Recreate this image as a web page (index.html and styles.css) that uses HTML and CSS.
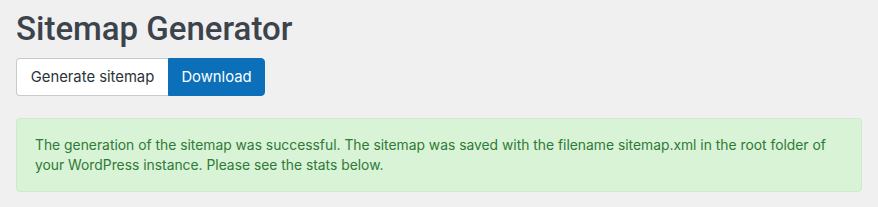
FILE: index.html
```html
<!DOCTYPE html>
<html lang="en">

<head>
    <meta charset="UTF-8">
    <meta name="viewport" content="width=device-width, initial-scale=1.0">
    <title>Sitemap Generator</title>
    <link rel="stylesheet" href="styles.css">
</head>

<body>
    <div class="wrap">
        <h1 class="page-title">Sitemap Generator</h1>
        <div class="actions">
            <button class="btn btn-default">Generate sitemap</button>
            <button class="btn btn-primary">Download</button>
        </div>
        <div class="notice notice-success">
            The generation of the sitemap was successful. The sitemap was saved with the filename sitemap.xml in the root folder of your WordPress instance. Please see the stats below.
        </div>
    </div>
</body>

</html>
```

FILE: styles.css
```css
* {
    padding: 0;
    margin: 0;
    box-sizing: border-box;
}

body {
    background-color: #f0f0f1;
    font-family: Inter, "Liberation Sans", sans-serif;
    color: #3c434a;
}

.wrap {
    padding: 8px 16px 0 16px;
}

.page-title {
    font-family: Roboto, Inter, sans-serif;
    font-size: 33px;
    font-weight: 500;
    line-height: 42px;
    color: #3c434a;
}

.actions {
    display: flex;
    margin-top: 8px;
}

.btn {
    height: 38px;
    padding: 0;
    font-family: inherit;
    font-size: 14.8px;
    border: 1px solid #c8cbce;
    cursor: pointer;
}

.btn-default {
    background-color: #fff;
    color: #2c3338;
    border-radius: 4px 0 0 4px;
    border-right: 0;
    width: 152px;
}

.btn-primary {
    background-color: #0b70b9;
    border-color: #0b70b9;
    color: #fff;
    border-radius: 0 4px 4px 0;
    width: 97px;
}

.notice {
    margin-top: 22px;
    padding: 16px 18px;
    font-size: 13.85px;
    line-height: 20px;
    border-radius: 4px;
}

.notice-success {
    background-color: #d9f3d6;
    border: 1px solid #cdebca;
    color: #2f7a36;
}
```
